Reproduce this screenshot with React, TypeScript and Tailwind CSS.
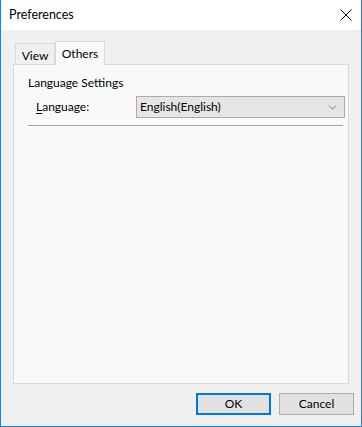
import { ChevronDown } from "lucide-react";

const font = { fontFamily: '"Segoe UI", Lato, Arial, sans-serif' };

export default function App() {
  return (
    <div
      className="flex h-[427px] w-[362px] flex-col border border-t-0 border-[#1883d7] bg-[#f0f0f0] text-[12px] text-black"
      style={font}
    >
      {/* title bar */}
      <div className="flex h-[31px] items-center justify-between bg-white pl-[8px] pr-[5px]">
        <span className="text-[12.5px]">Preferences</span>
        <svg width="12" height="12" viewBox="0 0 12 12" className="mr-[4px]">
          <path d="M0.5 0.5L11.5 11.5M11.5 0.5L0.5 11.5" stroke="#000" strokeWidth="1" />
        </svg>
      </div>

      {/* tabs */}
      <div className="flex flex-1 flex-col px-[12px] pt-[11px]">
        <div className="relative z-10 flex h-[23px] items-end pl-[2px]">
          <div className="flex h-[21px] w-[40px] items-center justify-center border border-b-0 border-[#d9d9d9] bg-[#f0f0f0] pt-[3px]">
            View
          </div>
          <div className="-mb-px flex h-[24px] w-[50px] items-center justify-center border border-b-0 border-[#d9d9d9] bg-[#f9f9f9]">
            Others
          </div>
        </div>
        <div className="flex h-[320px] flex-col border border-[#d9d9d9] bg-[#f9f9f9] pl-[14px] pr-[3px] pt-[9px]">
          <div>Language Settings</div>
          <div className="mt-[4px] flex items-center pl-[8px]">
            <span className="w-[100px]">
              <span className="underline underline-offset-2">L</span>anguage:
            </span>
            <div className="flex h-[22px] flex-1 items-center justify-between border border-[#acacac] bg-[#e5e5e5] pl-[3px] pr-[5px]">
              <span>English(English)</span>
              <ChevronDown size={13} strokeWidth={1.5} color="#606060" />
            </div>
          </div>
          <div className="mr-[2px] mt-[7px] h-[2px] border-t border-[#a0a0a0] bg-white" />
        </div>
      </div>

      {/* buttons */}
      <div className="flex justify-end gap-[8px] pb-[11px] pr-[7px] pt-[9px]">
        <button className="h-[22px] w-[75px] border-2 border-[#0078d7] bg-[#e1e1e1]">OK</button>
        <button className="h-[22px] w-[75px] border border-[#adadad] bg-[#e1e1e1]">Cancel</button>
      </div>
    </div>
  );
}
